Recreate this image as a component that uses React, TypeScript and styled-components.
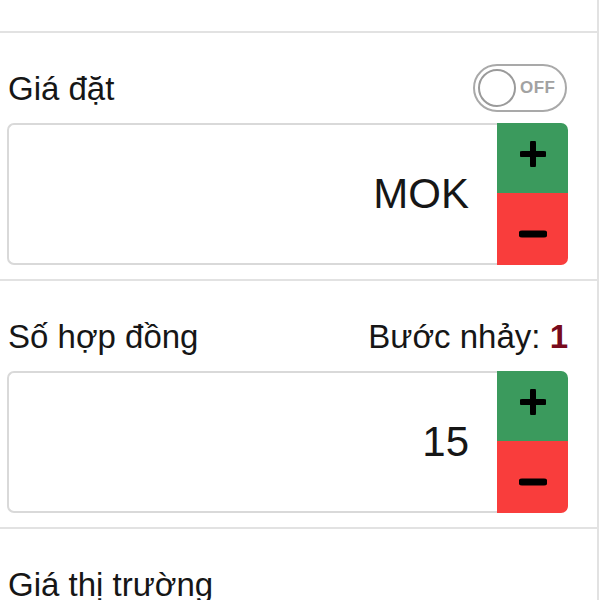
import styled, { createGlobalStyle } from 'styled-components'
import { FC } from 'react'

const GlobalStyle = createGlobalStyle`
	html, body {
		margin: 0;
		padding: 0;
		background: #ffffff;
		font-family: 'Liberation Sans', Arial, sans-serif;
		color: #161616;
	}
`

const Panel = styled.div`
	width: 597px;
	height: 600px;
	border-right: 2px solid #e2e2e2;
	overflow: hidden;
`

const TopGap = styled.div`
	height: 31px;
	border-bottom: 2px solid #e2e2e2;
`

const Section = styled.div`
	padding: 30px 29px 14px 7px;
	border-bottom: 2px solid #e2e2e2;
`

const LabelRow = styled.div`
	display: flex;
	align-items: center;
	justify-content: space-between;
	height: 50px;
	margin-bottom: 10px;
	padding-left: 1px;
`

const Label = styled.span`
	font-size: 33px;
	line-height: 1;
`

const StepText = styled.span`
	font-size: 33px;
	line-height: 1;
`

const StepValue = styled.span`
	color: #780a1c;
	font-weight: bold;
`

const Toggle = styled.div`
	box-sizing: border-box;
	width: 94px;
	height: 48px;
	border: 2px solid #a9a9a9;
	border-radius: 24px;
	display: flex;
	align-items: center;
	padding-left: 3px;
	gap: 4px;
	margin-right: 1px;
`

const Knob = styled.div`
	box-sizing: border-box;
	width: 38px;
	height: 38px;
	border-radius: 50%;
	border: 2px solid #9a9a9a;
	background: #ffffff;
`

const ToggleText = styled.span`
	font-size: 17px;
	font-weight: bold;
	color: #a2a2a2;
	letter-spacing: 0.5px;
`

const Box = styled.div`
	display: flex;
	height: 142px;
`

const Field = styled.div`
	box-sizing: border-box;
	flex: 1;
	display: flex;
	align-items: center;
	justify-content: flex-end;
	padding-right: 28px;
	border: 2px solid #d9d9d9;
	border-right: none;
	border-radius: 7px 0 0 7px;
	font-size: 42px;
`

const Buttons = styled.div`
	width: 71px;
	display: flex;
	flex-direction: column;
	border-radius: 0 7px 7px 0;
	overflow: hidden;
`

const StepButton = styled.div<{ $tone: 'up' | 'down' }>`
	flex: 1;
	display: flex;
	align-items: center;
	justify-content: center;
	background: ${p => (p.$tone === 'up' ? '#3b9a5d' : '#f93d3c')};
	padding-top: ${p => (p.$tone === 'up' ? '0' : '10px')};
	padding-bottom: ${p => (p.$tone === 'up' ? '8px' : '0')};
`

const Plus = () => (
	<svg width="26" height="26" viewBox="0 0 26 26">
		<path d="M13 2v22M2 13h22" stroke="#000" strokeWidth="6" strokeLinecap="round" />
	</svg>
)

const Minus = () => (
	<svg width="28" height="10" viewBox="0 0 28 10">
		<path d="M3 5h22" stroke="#000" strokeWidth="7" strokeLinecap="round" />
	</svg>
)

interface StepperProps {
	value: string
}

const Stepper: FC<StepperProps> = ({ value }) => (
	<Box>
		<Field>{value}</Field>
		<Buttons>
			<StepButton $tone="up">
				<Plus />
			</StepButton>
			<StepButton $tone="down">
				<Minus />
			</StepButton>
		</Buttons>
	</Box>
)

const App: FC = () => {
	return (
		<>
			<GlobalStyle />
			<Panel>
				<TopGap />
				<Section>
					<LabelRow>
						<Label>Giá đặt</Label>
						<Toggle>
							<Knob />
							<ToggleText>OFF</ToggleText>
						</Toggle>
					</LabelRow>
					<Stepper value="MOK" />
				</Section>
				<Section>
					<LabelRow>
						<Label>Số hợp đồng</Label>
						<StepText>
							Bước nhảy: <StepValue>1</StepValue>
						</StepText>
					</LabelRow>
					<Stepper value="15" />
				</Section>
				<Section>
					<LabelRow>
						<Label>Giá thị trường</Label>
					</LabelRow>
				</Section>
			</Panel>
		</>
	)
}

export default App
